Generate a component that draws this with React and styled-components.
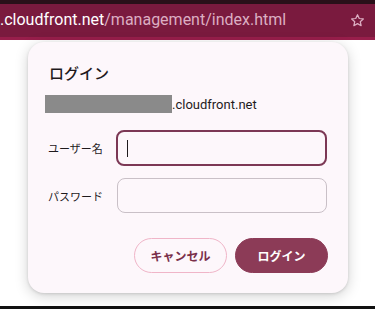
import React from "react";
import styled, { createGlobalStyle } from "styled-components";

const Global = createGlobalStyle`
  html, body { margin: 0; padding: 0; background: #ffffff; }
  body { font-family: Roboto, "Noto Sans CJK JP", sans-serif; width: 375px; height: 309px; overflow: hidden; }
`;

const Screen = styled.div`
  width: 375px;
  height: 309px;
  display: flex;
  flex-direction: column;
  background: #ffffff;
`;

const TopStrip = styled.div`
  height: 4px;
  background: #2a1019;
`;

const AddressBar = styled.div`
  height: 33px;
  background: #7a1a3e;
  display: flex;
  align-items: center;
  justify-content: space-between;
  padding: 0 10px 0 0;
  font-size: 16px;
`;

const Url = styled.div`
  white-space: nowrap;
  margin-top: -2px;
`;

const Host = styled.span`
  color: #ffffff;
`;

const Path = styled.span`
  color: #dcaec2;
`;

const Band = styled.div`
  height: 3px;
  background: #981e4b;
`;

const Page = styled.div`
  flex: 1;
  padding: 2px 27px 0 28px;
`;

const Dialog = styled.div`
  width: 320px;
  height: 251px;
  box-sizing: border-box;
  background: #fdf7fb;
  border-radius: 16px;
  box-shadow: 0 3px 14px rgba(0, 0, 0, 0.18), 0 1px 3px rgba(0, 0, 0, 0.12);
  padding: 22px 20px 20px 20px;
  display: flex;
  flex-direction: column;
`;

const Title = styled.div`
  font-size: 15px;
  line-height: 20px;
  font-weight: 500;
  color: #1f1a1d;
  padding-left: 1px;
`;

const HostRow = styled.div`
  margin-top: 11px;
  display: flex;
  align-items: center;
  height: 18px;
  font-size: 13px;
  color: #1f1a1d;
  margin-left: -3px;
`;

const Redacted = styled.span`
  display: inline-block;
  width: 127px;
  height: 18px;
  background: #8a8a8a;
`;

const Form = styled.div`
  margin-top: 17px;
  display: grid;
  grid-template-columns: 68px 1fr;
  row-gap: 12px;
  align-items: center;
`;

const Label = styled.div`
  font-size: 11px;
  color: #1f1a1d;
`;

const Field = styled.div`
  box-sizing: border-box;
  height: ${(p) => (p.$focused ? "36px" : "35px")};
  border: ${(p) => (p.$focused ? "2px solid #7c3855" : "1px solid #c9c0c7")};
  border-radius: 8px;
  background: #fdf7fb;
  display: flex;
  align-items: center;
  padding-left: ${(p) => (p.$focused ? "9px" : "10px")};
  margin-left: ${(p) => (p.$focused ? "0" : "1px")};
  margin-right: 1px;
`;

const Caret = styled.span`
  width: 1px;
  height: 17px;
  background: #1f1a1d;
`;

const Actions = styled.div`
  margin-top: 25px;
  display: flex;
  justify-content: flex-end;
  gap: 8px;
`;

const Button = styled.button`
  width: 93px;
  height: 35px;
  border-radius: 18px;
  font-family: Roboto, "Noto Sans CJK JP", sans-serif;
  font-size: 12px;
  font-weight: 700;
  cursor: pointer;
  border: 1px solid ${(p) => (p.$primary ? "#8c3b57" : "#f0b5c8")};
  background: ${(p) => (p.$primary ? "#8c3b57" : "#fdf7fb")};
  color: ${(p) => (p.$primary ? "#ffffff" : "#7a2f4a")};
  padding: 0;
`;

const BottomLine = styled.div`
  height: 3px;
  background: #111111;
`;

const Star = () => (
  <svg width="15" height="15" viewBox="0 0 24 24" fill="none" stroke="#dcaec2" strokeWidth="2" strokeLinejoin="round">
    <path d="M12 2.8l2.8 6 6.5.7-4.9 4.4 1.4 6.4L12 17l-5.8 3.3 1.4-6.4-4.9-4.4 6.5-.7z" />
  </svg>
);

export default function App() {
  return (
    <Screen>
      <Global />
      <TopStrip />
      <AddressBar>
        <Url>
          <Host>.cloudfront.net</Host>
          <Path>/management/index.html</Path>
        </Url>
        <Star />
      </AddressBar>
      <Band />
      <Page>
        <Dialog>
          <Title>ログイン</Title>
          <HostRow>
            <Redacted />
            <span>.cloudfront.net</span>
          </HostRow>
          <Form>
            <Label>ユーザー名</Label>
            <Field $focused>
              <Caret />
            </Field>
            <Label>パスワード</Label>
            <Field />
          </Form>
          <Actions>
            <Button>キャンセル</Button>
            <Button $primary>ログイン</Button>
          </Actions>
        </Dialog>
      </Page>
      <BottomLine />
    </Screen>
  );
}
